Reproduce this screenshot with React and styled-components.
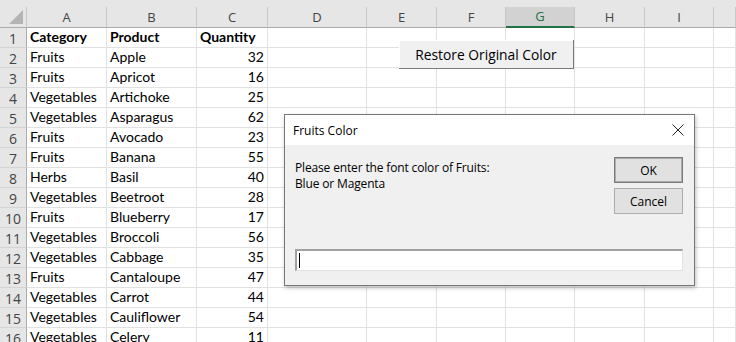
import React from "react";
import styled, { createGlobalStyle } from "styled-components";

const GlobalStyle = createGlobalStyle`
  html, body {
    margin: 0;
    padding: 0;
    background: #ffffff;
    overflow: hidden;
  }
  * { box-sizing: border-box; }
`;

const COLS = [
  { key: "A", w: 80 },
  { key: "B", w: 90 },
  { key: "C", w: 71 },
  { key: "D", w: 99 },
  { key: "E", w: 70 },
  { key: "F", w: 69 },
  { key: "G", w: 69 },
  { key: "H", w: 70 },
  { key: "I", w: 69 },
  { key: "", w: 22 },
];

const ROWS = [
  ["Category", "Product", "Quantity"],
  ["Fruits", "Apple", 32],
  ["Fruits", "Apricot", 16],
  ["Vegetables", "Artichoke", 25],
  ["Vegetables", "Asparagus", 62],
  ["Fruits", "Avocado", 23],
  ["Fruits", "Banana", 55],
  ["Herbs", "Basil", 40],
  ["Vegetables", "Beetroot", 28],
  ["Fruits", "Blueberry", 17],
  ["Vegetables", "Broccoli", 56],
  ["Vegetables", "Cabbage", 35],
  ["Fruits", "Cantaloupe", 47],
  ["Vegetables", "Carrot", 44],
  ["Vegetables", "Cauliflower", 54],
  ["Vegetables", "Celery", 11],
];

const Page = styled.div`
  position: relative;
  width: 736px;
  height: 342px;
  overflow: hidden;
  background: #fff;
`;

const TopStrip = styled.div`
  height: 7px;
  background: #e6e6e6;
`;

const Sheet = styled.div`
  display: grid;
  grid-template-columns: 27px ${COLS.map((c) => c.w + "px").join(" ")};
  grid-auto-rows: 20px;
  grid-template-rows: 21px;
`;

const Corner = styled.div`
  position: relative;
  background: #e6e6e6;
  border-right: 1px solid #c8c8c8;
  border-bottom: 1px solid #ababab;
  &::after {
    content: "";
    position: absolute;
    right: 3px;
    bottom: 3px;
    border-style: solid;
    border-width: 0 0 14px 14px;
    border-color: transparent transparent #b4b4b4 transparent;
  }
`;

const ColHead = styled.div`
  background: ${(p) => (p.$active ? "#d2d2d2" : "#e6e6e6")};
  border-right: 1px solid #c8c8c8;
  border-bottom: ${(p) => (p.$active ? "2px solid #217346" : "1px solid #ababab")};
  color: ${(p) => (p.$active ? "#217346" : "#444")};
  font-family: "Open Sans", "Liberation Sans", sans-serif;
  font-size: 13px;
  display: flex;
  align-items: center;
  justify-content: center;
  padding-bottom: 1px;
`;

const RowHead = styled.div`
  background: #e6e6e6;
  border-right: 1px solid #ababab;
  border-bottom: 1px solid #d4d4d4;
  color: #444;
  font-family: "Open Sans", "Liberation Sans", sans-serif;
  font-size: 14px;
  display: flex;
  align-items: center;
  justify-content: center;
  padding-top: 1px;
`;

const Cell = styled.div`
  border-right: 1px solid #e1e1e1;
  border-bottom: 1px solid #e1e1e1;
  font-family: "Lato", "Liberation Sans", sans-serif;
  font-size: 14px;
  font-weight: ${(p) => (p.$bold ? 700 : 400)};
  color: #000;
  display: flex;
  align-items: flex-end;
  justify-content: ${(p) => (p.$num ? "flex-end" : "flex-start")};
  padding: 0 3px 1px 3px;
  white-space: nowrap;
  overflow: visible;
  line-height: 18px;
`;

const ShapeButton = styled.div`
  position: absolute;
  left: 399px;
  top: 40px;
  width: 175px;
  height: 29px;
  background: #f0f0f0;
  border-right: 1px solid #7a7a7a;
  border-bottom: 1px solid #7a7a7a;
  box-shadow: inset 1px 1px 0 #ffffff;
  font-family: "Open Sans", "Liberation Sans", sans-serif;
  font-size: 13.8px;
  color: #000;
  display: flex;
  align-items: center;
  justify-content: center;
`;

const Dialog = styled.div`
  position: absolute;
  left: 284px;
  top: 114px;
  width: 411px;
  height: 172px;
  background: #f0f0f0;
  border: 1px solid #777777;
  box-shadow: 1px 2px 4px rgba(0, 0, 0, 0.25);
  display: flex;
  flex-direction: column;
  font-family: "Open Sans", "Liberation Sans", sans-serif;
  font-size: 12px;
  color: #000;
`;

const TitleBar = styled.div`
  height: 30px;
  background: #fff;
  display: flex;
  align-items: center;
  justify-content: space-between;
  padding: 0 10px 0 8px;
  font-size: 12px;
`;

const Body = styled.div`
  flex: 1;
  display: flex;
  flex-direction: column;
  padding: 11px 11px 0 10px;
`;

const TopArea = styled.div`
  display: flex;
  justify-content: space-between;
  height: 93px;
`;

const Prompt = styled.div`
  line-height: 16px;
  padding-top: 4px;
  letter-spacing: -0.15px;
`;

const ButtonCol = styled.div`
  display: flex;
  flex-direction: column;
  gap: 5px;
  padding-top: 1px;
`;

const DlgButton = styled.button`
  width: 69px;
  height: 26px;
  background: #e1e1e1;
  border: 1px solid ${(p) => (p.$default ? "#7a7a7a" : "#adadad")};
  box-shadow: ${(p) => (p.$default ? "inset 0 0 0 1px #adadad" : "none")};
  font-family: inherit;
  font-size: 12px;
  color: #000;
  padding: 0;
`;

const InputBox = styled.div`
  width: 388px;
  height: 22px;
  background: #fff;
  border-top: 2px solid #a0a0a0;
  border-left: 2px solid #a0a0a0;
  border-right: 1px solid #e3e3e3;
  border-bottom: 1px solid #e3e3e3;
  display: flex;
  align-items: center;
  padding-left: 2px;
`;

const Caret = styled.span`
  width: 1px;
  height: 15px;
  background: #000;
`;

const CloseIcon = () => (
  <svg width="12" height="12" viewBox="0 0 12 12">
    <path d="M0.5 0.5 L11.5 11.5 M11.5 0.5 L0.5 11.5" stroke="#222" strokeWidth="1" fill="none" />
  </svg>
);

export default function App() {
  return (
    <Page>
      <GlobalStyle />
      <TopStrip />
      <Sheet>
        <Corner />
        {COLS.map((c, i) => (
          <ColHead key={"h" + i} $active={c.key === "G"}>
            {c.key}
          </ColHead>
        ))}
        {ROWS.map((r, ri) => (
          <React.Fragment key={ri}>
            <RowHead>{ri + 1}</RowHead>
            {COLS.map((c, ci) => {
              const v = ci < 3 ? r[ci] : "";
              return (
                <Cell key={ci} $bold={ri === 0} $num={typeof v === "number"}>
                  {v}
                </Cell>
              );
            })}
          </React.Fragment>
        ))}
      </Sheet>
      <ShapeButton>Restore Original Color</ShapeButton>
      <Dialog>
        <TitleBar>
          <span>Fruits Color</span>
          <CloseIcon />
        </TitleBar>
        <Body>
          <TopArea>
            <Prompt>
              Please enter the font color of Fruits:
              <br />
              Blue or Magenta
            </Prompt>
            <ButtonCol>
              <DlgButton $default>OK</DlgButton>
              <DlgButton>Cancel</DlgButton>
            </ButtonCol>
          </TopArea>
          <InputBox>
            <Caret />
          </InputBox>
        </Body>
      </Dialog>
    </Page>
  );
}
